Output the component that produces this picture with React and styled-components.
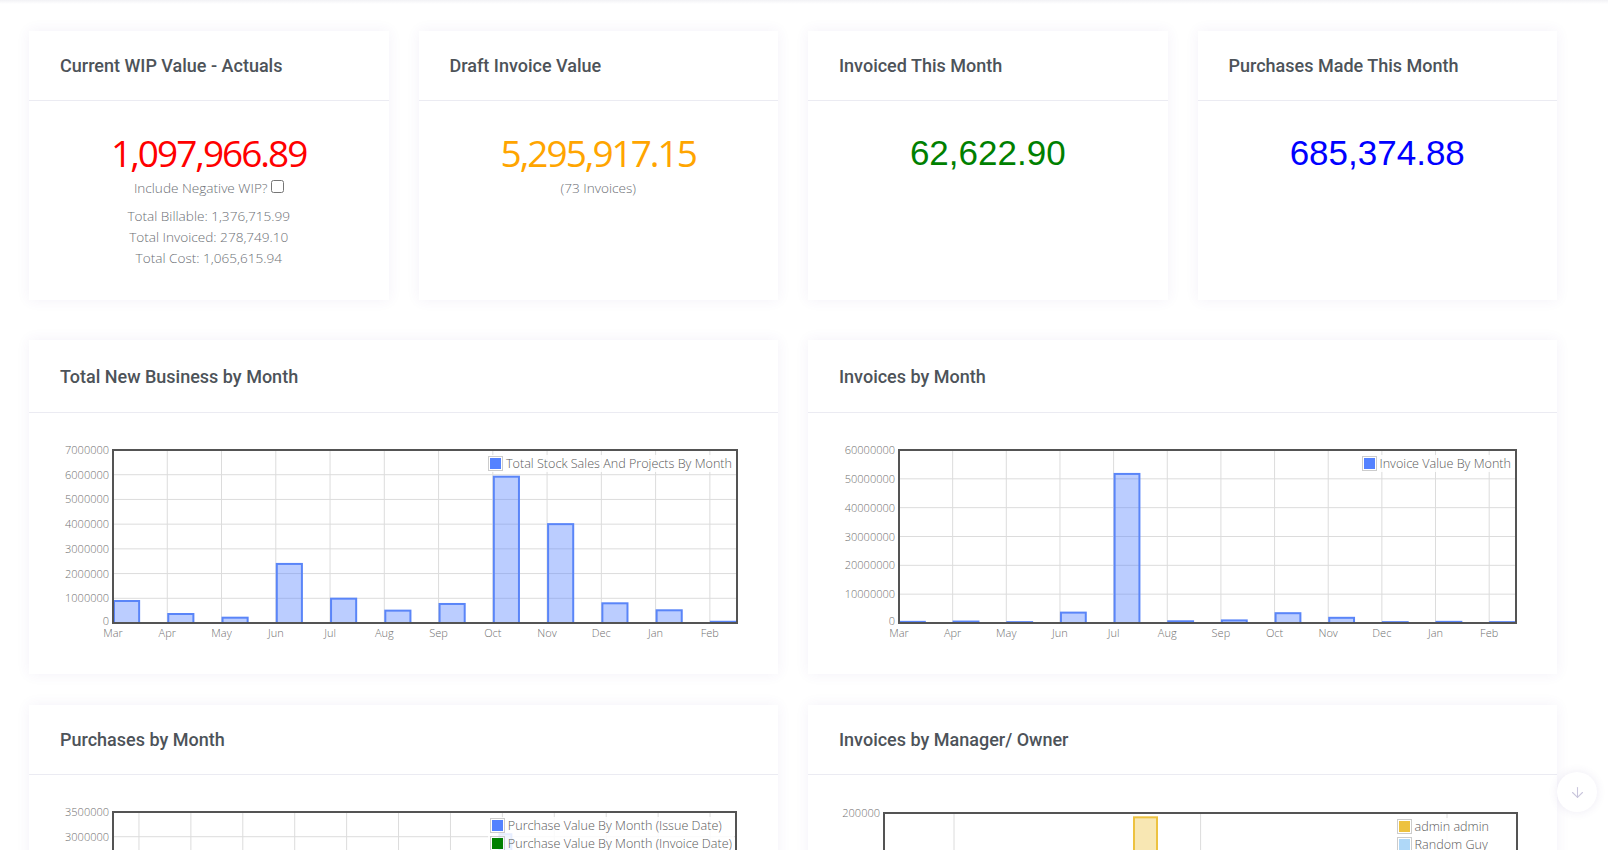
import React from 'react';
import styled, { createGlobalStyle } from 'styled-components';
import { ArrowDown } from 'lucide-react';

const GlobalStyle = createGlobalStyle`
  body {
    margin: 0;
    background: #ffffff;
    font-family: 'Open Sans', 'Noto Sans', sans-serif;
  }
`;

const months = ['Mar', 'Apr', 'May', 'Jun', 'Jul', 'Aug', 'Sep', 'Oct', 'Nov', 'Dec', 'Jan', 'Feb'];

const BLUE = '#5a85f8';
const BLUE_FILL = 'rgba(84, 130, 255, 0.4)';

// flot style time axis: ticks on the left edge of each bar
function timeAxis(x0, x1, values) {
  const step = (x1 - x0) / (values.length - 0.5);
  return {
    ticks: values.map((v, i) => ({ x: x0 + i * step, label: months[i] })),
    bars: values.map((v, i) => ({ x: x0 + i * step, w: step / 2, v, stroke: BLUE, fill: BLUE_FILL })),
  };
}

const charts = {
  business: {
    plot: { x0: 84, x1: 708, y0: 37, y1: 210 },
    max: 7000000,
    step: 1000000,
    ...timeAxis(84, 708, [890000, 364000, 215000, 2390000, 985000, 500000, 770000, 5920000, 4000000, 797000, 514000, 50000]),
    legend: [{ label: 'Total Stock Sales And Projects By Month', color: '#5482ff' }],
    legendRight: 44,
  },
  invoices: {
    plot: { x0: 91, x1: 708, y0: 37, y1: 210 },
    max: 60000000,
    step: 10000000,
    ...timeAxis(91, 708, [400000, 500000, 300000, 3600000, 51700000, 600000, 900000, 3400000, 1800000, 300000, 400000, 300000]),
    legend: [{ label: 'Invoice Value By Month', color: '#5482ff' }],
    legendRight: 44,
  },
};

// purchases: categories centred in slots, two series side by side
const purchaseStep = (707 - 84) / 12;
const purchaseIssue = [900000, 1200000, 700000, 1500000, 1100000, 800000, 1300000, 3050000, 1700000, 900000, 1000000, 600000];
const purchaseInvoice = [700000, 1000000, 900000, 1200000, 1300000, 600000, 1100000, 2600000, 1500000, 800000, 900000, 500000];
charts.purchases = {
  plot: { x0: 84, x1: 707, y0: 37, y1: 210 },
  max: 3500000,
  step: 500000,
  ticks: months.map((m, i) => ({ x: 84 + (i + 0.5) * purchaseStep, label: m })),
  bars: [
    ...purchaseIssue.map((v, i) => ({ x: 84 + (i + 0.5) * purchaseStep - 4, w: 14, v, stroke: BLUE, fill: BLUE_FILL })),
    ...purchaseInvoice.map((v, i) => ({ x: 84 + (i + 0.5) * purchaseStep + 10, w: 14, v, stroke: '#008000', fill: 'rgba(0, 128, 0, 0.4)' })),
  ],
  legend: [
    { label: 'Purchase Value By Month (Issue Date)', color: '#5482ff' },
    { label: 'Purchase Value By Month (Invoice Date)', color: '#008000' },
  ],
  legendRight: 44,
};

charts.managers = {
  plot: { x0: 76, x1: 709, y0: 38, y1: 211 },
  max: 200000,
  step: 200000,
  ticks: [{ x: 146, label: '' }, { x: 392.6, label: '' }, { x: 639, label: '' }],
  bars: [
    { x: 325, w: 25, v: 195000, stroke: '#edc240', fill: 'rgba(237, 194, 64, 0.4)' },
    { x: 350, w: 25, v: 42000, stroke: '#afd8f8', fill: 'rgba(175, 216, 248, 0.4)' },
  ],
  legend: [
    { label: 'admin admin', color: '#edc240' },
    { label: 'Random Guy', color: '#afd8f8' },
  ],
  legendRight: 66,
};

function BarChart({ chart, height }) {
  const { plot, max, step } = chart;
  const h = plot.y1 - plot.y0;
  const toY = (v) => plot.y1 - (v / max) * h;
  const yTicks = [];
  for (let v = 0; v <= max; v += step) yTicks.push(v);

  return (
    <ChartArea $height={height}>
      <svg width="100%" height={height} viewBox={`0 0 749 ${height}`}>
        {yTicks.map((v) => (
          <g key={v}>
            {v > 0 && v < max && (
              <line x1={plot.x0} x2={plot.x1} y1={toY(v)} y2={toY(v)} stroke="#dcdcdc" strokeWidth="1" />
            )}
            <AxisText x={plot.x0 - 4} y={toY(v) + (v === 0 ? 2 : 4)} textAnchor="end">{v}</AxisText>
          </g>
        ))}
        {chart.ticks.map((t, i) => (
          <g key={i}>
            {t.x > plot.x0 + 1 && (
              <line x1={t.x} x2={t.x} y1={plot.y0} y2={plot.y1} stroke="#dcdcdc" strokeWidth="1" />
            )}
            <AxisText x={t.x} y={plot.y1 + 14} textAnchor="middle">{t.label}</AxisText>
          </g>
        ))}
        {chart.bars.map((b, i) => {
          const top = toY(b.v);
          const right = Math.min(b.x + b.w, plot.x1);
          return (
            <rect
              key={i}
              x={b.x + 1}
              y={top}
              width={Math.max(right - b.x - 2, 1)}
              height={plot.y1 - top}
              fill={b.fill}
              stroke={b.stroke}
              strokeWidth="2"
            />
          );
        })}
        <rect
          x={plot.x0}
          y={plot.y0}
          width={plot.x1 - plot.x0}
          height={h}
          fill="none"
          stroke="#545454"
          strokeWidth="2"
        />
      </svg>
      <Legend $top={plot.y0 + 5} $right={chart.legendRight}>
        {chart.legend.map((l) => (
          <LegendRow key={l.label}>
            <Swatch><SwatchFill $color={l.color} /></Swatch>
            {l.label}
          </LegendRow>
        ))}
      </Legend>
    </ChartArea>
  );
}

function App() {
  return (
    <>
      <GlobalStyle />
      <TopShade />
      <Page>
        <StatRow>
          <Card>
            <CardHeader><Title>Current WIP Value - Actuals</Title></CardHeader>
            <StatBody>
              <BigNumber $color="#ff0000">1,097,966.89</BigNumber>
              <SubText>Include Negative WIP? <CheckBox type="checkbox" /></SubText>
              <Totals>
                <SubText>Total Billable: 1,376,715.99</SubText>
                <SubText>Total Invoiced: 278,749.10</SubText>
                <SubText>Total Cost: 1,065,615.94</SubText>
              </Totals>
            </StatBody>
          </Card>
          <Card>
            <CardHeader><Title>Draft Invoice Value</Title></CardHeader>
            <StatBody>
              <BigNumber $color="#ffa500">5,295,917.15</BigNumber>
              <SubText>(73 Invoices)</SubText>
            </StatBody>
          </Card>
          <Card>
            <CardHeader><Title>Invoiced This Month</Title></CardHeader>
            <StatBody>
              <PlainNumber $color="#008000">62,622.90</PlainNumber>
            </StatBody>
          </Card>
          <Card>
            <CardHeader><Title>Purchases Made This Month</Title></CardHeader>
            <StatBody>
              <PlainNumber $color="#0000ff">685,374.88</PlainNumber>
            </StatBody>
          </Card>
        </StatRow>

        <ChartRow>
          <Card>
            <CardHeader $height={72}><Title>Total New Business by Month</Title></CardHeader>
            <BarChart chart={charts.business} height={261} />
          </Card>
          <Card>
            <CardHeader $height={72}><Title>Invoices by Month</Title></CardHeader>
            <BarChart chart={charts.invoices} height={261} />
          </Card>
        </ChartRow>

        <ChartRow>
          <Card>
            <CardHeader><Title>Purchases by Month</Title></CardHeader>
            <BarChart chart={charts.purchases} height={263} />
          </Card>
          <Card>
            <CardHeader><Title>Invoices by Manager/ Owner</Title></CardHeader>
            <BarChart chart={charts.managers} height={263} />
          </Card>
        </ChartRow>
      </Page>
      <ScrollButton><ArrowDown size={17} strokeWidth={1.5} /></ScrollButton>
    </>
  );
}

const TopShade = styled.div`
  height: 4px;
  background: linear-gradient(#f2f2f5, #ffffff);
`;

const Page = styled.div`
  padding: 27px 51px 40px 29px;
`;

const StatRow = styled.div`
  display: grid;
  grid-template-columns: repeat(4, 1fr);
  gap: 30px;
  margin-bottom: 40px;
`;

const ChartRow = styled.div`
  display: grid;
  grid-template-columns: repeat(2, 1fr);
  gap: 30px;
  margin-bottom: 31px;
`;

const Card = styled.div`
  background: #ffffff;
  box-shadow: 0 0 13px rgba(82, 63, 150, 0.07);
  display: flex;
  flex-direction: column;
`;

const CardHeader = styled.div`
  height: ${(p) => p.$height || 69}px;
  flex-shrink: 0;
  padding: 0 31px;
  display: flex;
  align-items: center;
  border-bottom: 1px solid #ebebf2;
`;

const Title = styled.div`
  font-family: Roboto, 'Liberation Sans', sans-serif;
  font-weight: 500;
  font-size: 18px;
  color: #4d5359;
`;

const StatBody = styled.div`
  height: 199px;
  box-sizing: border-box;
  padding-top: 28px;
  display: flex;
  flex-direction: column;
  align-items: center;
`;

const BigNumber = styled.div`
  font-family: 'Open Sans', 'Noto Sans', sans-serif;
  font-size: 37px;
  line-height: 48px;
  letter-spacing: -2px;
  color: ${(p) => p.$color};
`;

const PlainNumber = styled.div`
  font-family: 'Liberation Sans', Arial, sans-serif;
  font-size: 35px;
  line-height: 48px;
  color: ${(p) => p.$color};
`;

const SubText = styled.div`
  font-family: 'Open Sans', 'Noto Sans', sans-serif;
  font-weight: 300;
  font-size: 13.6px;
  line-height: 21px;
  color: #6c6f75;
  display: flex;
  align-items: center;
  gap: 3px;
`;

const CheckBox = styled.input`
  width: 13px;
  height: 13px;
  margin: 0 0 2px 0;
`;

const Totals = styled.div`
  margin-top: 7px;
  display: flex;
  flex-direction: column;
  align-items: center;
`;

const ChartArea = styled.div`
  position: relative;
  height: ${(p) => p.$height}px;
`;

const AxisText = styled.text`
  font-family: 'Open Sans', 'Noto Sans', sans-serif;
  font-weight: 300;
  font-size: 11px;
  fill: #707070;
`;

const Legend = styled.div`
  position: absolute;
  top: ${(p) => p.$top}px;
  right: ${(p) => p.$right}px;
  background: rgba(255, 255, 255, 0.85);
  padding: 1px 2px;
  display: flex;
  flex-direction: column;
  gap: 3px;
`;

const LegendRow = styled.div`
  display: flex;
  align-items: center;
  gap: 3px;
  font-family: 'Open Sans', 'Noto Sans', sans-serif;
  font-weight: 300;
  font-size: 12.6px;
  line-height: 15px;
  color: #5a5a5a;
`;

const Swatch = styled.div`
  width: 11px;
  height: 11px;
  padding: 1px;
  border: 1px solid #cccccc;
`;

const SwatchFill = styled.div`
  width: 100%;
  height: 100%;
  background: ${(p) => p.$color};
`;

const ScrollButton = styled.div`
  position: fixed;
  top: 772px;
  right: 11px;
  width: 40px;
  height: 40px;
  border-radius: 50%;
  background: #ffffff;
  box-shadow: 0 0 10px rgba(82, 63, 150, 0.1);
  display: flex;
  align-items: center;
  justify-content: center;
  color: #c9c6dc;
`;

export default App;
